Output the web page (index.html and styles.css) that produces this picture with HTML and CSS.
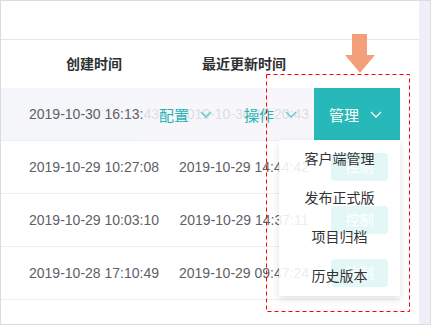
FILE: index.html
```html
<!DOCTYPE html>
<html lang="zh-CN">

<head>
    <meta charset="UTF-8">
    <meta name="viewport" content="width=device-width, initial-scale=1.0">
    <title>项目列表</title>
    <link rel="stylesheet" href="styles.css">
</head>

<body>
    <div class="frame">
        <div class="main">
            <div class="topbar"></div>
            <div class="table">
                <div class="thead">
                    <div class="cell">创建时间</div>
                    <div class="cell">最近更新时间</div>
                    <div class="cell"></div>
                </div>
                <div class="row hover">
                    <div class="cell">2019-10-30 16:13:43</div>
                    <div class="cell">2019-10-30 16:20:43</div>
                    <div class="cell"></div>
                    <!--悬停时的操作栏-->
                    <div class="actions">
                        <a class="act" href="javascript:void 0">配置
                            <svg class="arrow" viewBox="0 0 12 7"><polyline points="1,1 6,6 11,1" /></svg>
                        </a>
                        <a class="act" href="javascript:void 0">操作
                            <svg class="arrow" viewBox="0 0 12 7"><polyline points="1,1 6,6 11,1" /></svg>
                        </a>
                        <a class="manage" href="javascript:void 0">管理
                            <svg class="arrow" viewBox="0 0 12 7"><polyline points="1,1 6,6 11,1" /></svg>
                        </a>
                    </div>
                    <ul class="menu">
                        <li>客户端管理</li>
                        <li>发布正式版</li>
                        <li>项目归档</li>
                        <li>历史版本</li>
                    </ul>
                </div>
                <div class="row">
                    <div class="cell">2019-10-29 10:27:08</div>
                    <div class="cell">2019-10-29 14:44:42</div>
                    <div class="cell ctrl"><span class="btn">控制</span></div>
                </div>
                <div class="row">
                    <div class="cell">2019-10-29 10:03:10</div>
                    <div class="cell">2019-10-29 14:37:11</div>
                    <div class="cell ctrl"><span class="btn">控制</span></div>
                </div>
                <div class="row">
                    <div class="cell">2019-10-28 17:10:49</div>
                    <div class="cell">2019-10-29 09:47:24</div>
                    <div class="cell ctrl"><span class="btn">控制</span></div>
                </div>
            </div>
        </div>
        <div class="side"></div>
    </div>

    <!--标注：箭头和虚线框-->
    <svg class="mark" width="431" height="325" viewBox="0 0 431 325">
        <rect x="352" y="34" width="15" height="21" fill="#f39f7a" />
        <polygon points="345,55 375,55 360,73" fill="#f39f7a" />
        <rect x="266.5" y="74.5" width="143" height="237" fill="none" stroke="#ff0000" stroke-width="1" stroke-dasharray="4 3" />
    </svg>
</body>

</html>
```

FILE: styles.css
```css
* {
    margin: 0;
    padding: 0;
    list-style: none;
    box-sizing: border-box;
}

body {
    position: relative;
    width: 431px;
    height: 325px;
    font-family: "Liberation Sans", "Noto Sans CJK SC", sans-serif;
    font-size: 14px;
    color: #5e6066;
    background: #fff;
}

a {
    text-decoration: none;
}

.frame {
    display: flex;
    width: 431px;
    height: 325px;
    border: 1px solid #dcdcdc;
    background: #fff;
}

.main {
    position: relative;
    flex: 1;
}

.side {
    width: 11px;
    background: #eff0f7;
}

.topbar {
    height: 39px;
    border-bottom: 1px solid #e6e6e6;
}

.table {
    width: 399px;
}

.thead,
.row {
    display: grid;
    grid-template-columns: 186px 114px 99px;
}

.thead {
    height: 48px;
    padding-bottom: 3px;
    font-weight: bold;
    color: #303133;
}

.cell {
    display: flex;
    align-items: center;
    justify-content: center;
    white-space: nowrap;
}

.row {
    position: relative;
    height: 53px;
    border-bottom: 1px solid #ebeef5;
}

.row.hover {
    background: #f5f6fa;
}

.cell.ctrl {
    justify-content: flex-end;
    padding-right: 12px;
}

.btn {
    width: 57px;
    height: 28px;
    line-height: 28px;
    text-align: center;
    border-radius: 4px;
    background: #27b9b9;
    color: #fff;
}

.actions {
    position: absolute;
    left: 142px;
    top: 0;
    right: 0;
    bottom: 0;
    display: flex;
    align-items: center;
    padding-left: 16px;
    background: rgba(245, 246, 250, .84);
}

.act {
    display: flex;
    align-items: center;
    gap: 11px;
    font-size: 15px;
    color: #27b3b3;
}

.act + .act {
    margin-left: 32px;
}

.act .arrow {
    color: #5ec8c8;
}

.arrow {
    width: 12px;
    height: 7px;
    fill: none;
    stroke: currentColor;
    stroke-width: 1.3;
}

.manage {
    display: flex;
    align-items: center;
    gap: 11px;
    width: 86px;
    height: 100%;
    margin-left: auto;
    padding-left: 15px;
    font-size: 15px;
    color: #fff;
    background: #27b9b9;
}

.menu {
    position: absolute;
    right: 0;
    top: 100%;
    z-index: 2;
    width: 121px;
    background: rgba(255, 255, 255, .88);
    box-shadow: 0 3px 8px rgba(0, 0, 0, .12);
}

.menu li {
    height: 39px;
    line-height: 39px;
    text-align: center;
    color: #333;
}

.mark {
    position: absolute;
    left: 0;
    top: 0;
    z-index: 5;
    pointer-events: none;
}
```
